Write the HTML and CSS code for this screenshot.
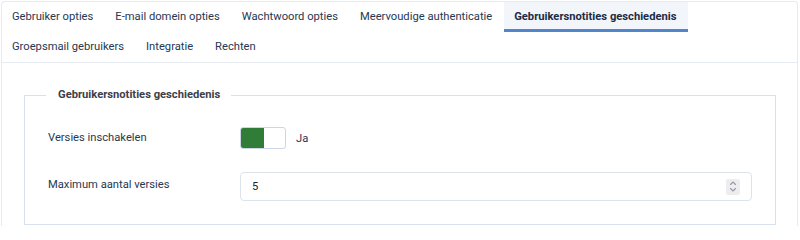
FILE: index.html
```html
<!DOCTYPE html>
<html lang="nl">
<head>
<meta charset="utf-8">
<title>Gebruikersnotities geschiedenis</title>
<link rel="stylesheet" href="styles.css">
</head>
<body>
<div class="tabs">
  <div class="tablist">
    <button class="tab">Gebruiker opties</button>
    <button class="tab">E-mail domein opties</button>
    <button class="tab">Wachtwoord opties</button>
    <button class="tab">Meervoudige authenticatie</button>
    <button class="tab active">Gebruikersnotities geschiedenis</button>
    <button class="tab">Groepsmail gebruikers</button>
    <button class="tab">Integratie</button>
    <button class="tab">Rechten</button>
  </div>
  <div class="panel">
    <fieldset class="group">
      <legend class="group-title">Gebruikersnotities geschiedenis</legend>
      <div class="row row-toggle">
        <div class="label">Versies inschakelen</div>
        <div class="control">
          <span class="switch"><span class="switch-on"></span></span>
          <span class="switch-text">Ja</span>
        </div>
      </div>
      <div class="row row-input">
        <div class="label label-top">Maximum aantal versies</div>
        <div class="control">
          <div class="number">
            <span class="number-value">5</span>
            <span class="spinner">
              <svg width="8" height="13" viewBox="0 0 8 13" fill="none" stroke="#9a9aa3" stroke-width="1.1" stroke-linecap="round" stroke-linejoin="round"><path d="M1.5 4.5 L4 2 L6.5 4.5"/><path d="M1.5 8.5 L4 11 L6.5 8.5"/></svg>
            </span>
          </div>
        </div>
      </div>
    </fieldset>
  </div>
</div>
</body>
</html>
```

FILE: styles.css
```css
html, body {
  margin: 0;
  padding: 0;
  background: #ffffff;
}
body {
  padding: 1px 2px 0 1px;
  font-family: Roboto, "Noto Sans", "Liberation Sans", sans-serif;
  font-size: 11.2px;
  color: #273852;
  height: 226px;
  box-sizing: border-box;
  overflow: hidden;
}
.tabs {
  border: 1px solid #e6ebf2;
  border-bottom: none;
  border-radius: 4px 4px 0 0;
  height: 100%;
  box-sizing: border-box;
}
.tablist {
  display: flex;
  flex-wrap: wrap;
  border-bottom: 1px solid #e6ebf2;
}
.tab {
  font: inherit;
  color: #273852;
  background: transparent;
  border: none;
  height: 30px;
  padding: 0 12px 1px 10px;
  margin: 0;
  cursor: pointer;
  white-space: nowrap;
}
.tab.active {
  background: #f2f5f9;
  font-weight: 700;
  color: #1c2c47;
  box-shadow: inset 0 -3px 0 #5286cc;
}
.panel {
  padding: 24px 21px 0 22px;
}
.group {
  margin: 0;
  border: 1px solid #d7e0ec;
  padding: 24px 24px 23px 23px;
  min-width: 0;
}
.group-title {
  font-weight: 700;
  font-size: 11.2px;
  line-height: 16px;
  color: #3c4049;
  padding: 0 11px 0 12px;
  margin-left: -2px;
}
.row {
  display: flex;
}
.row-toggle {
  align-items: center;
  height: 22px;
  margin-bottom: 23px;
}
.row-input {
  align-items: flex-start;
}
.label {
  width: 192px;
  flex: none;
  line-height: 16px;
}
.label-top {
  padding-top: 5px;
}
.control {
  display: flex;
  align-items: center;
}
.switch {
  display: flex;
  width: 44px;
  height: 20px;
  border: 1px solid #cdd7e3;
  border-radius: 3px;
  overflow: hidden;
  background: #ffffff;
}
.switch-on {
  width: 23px;
  background: #2f7d36;
}
.switch-text {
  margin-left: 10px;
}
.number {
  box-sizing: border-box;
  width: 512px;
  height: 29px;
  border: 1px solid #dde3eb;
  border-radius: 4px;
  display: flex;
  align-items: center;
  justify-content: space-between;
  padding: 0 11px 0 11px;
  color: #1f2329;
}
.spinner {
  width: 14px;
  height: 16px;
  background: #ececf1;
  border-radius: 2px;
  display: flex;
  align-items: center;
  justify-content: center;
}
```
